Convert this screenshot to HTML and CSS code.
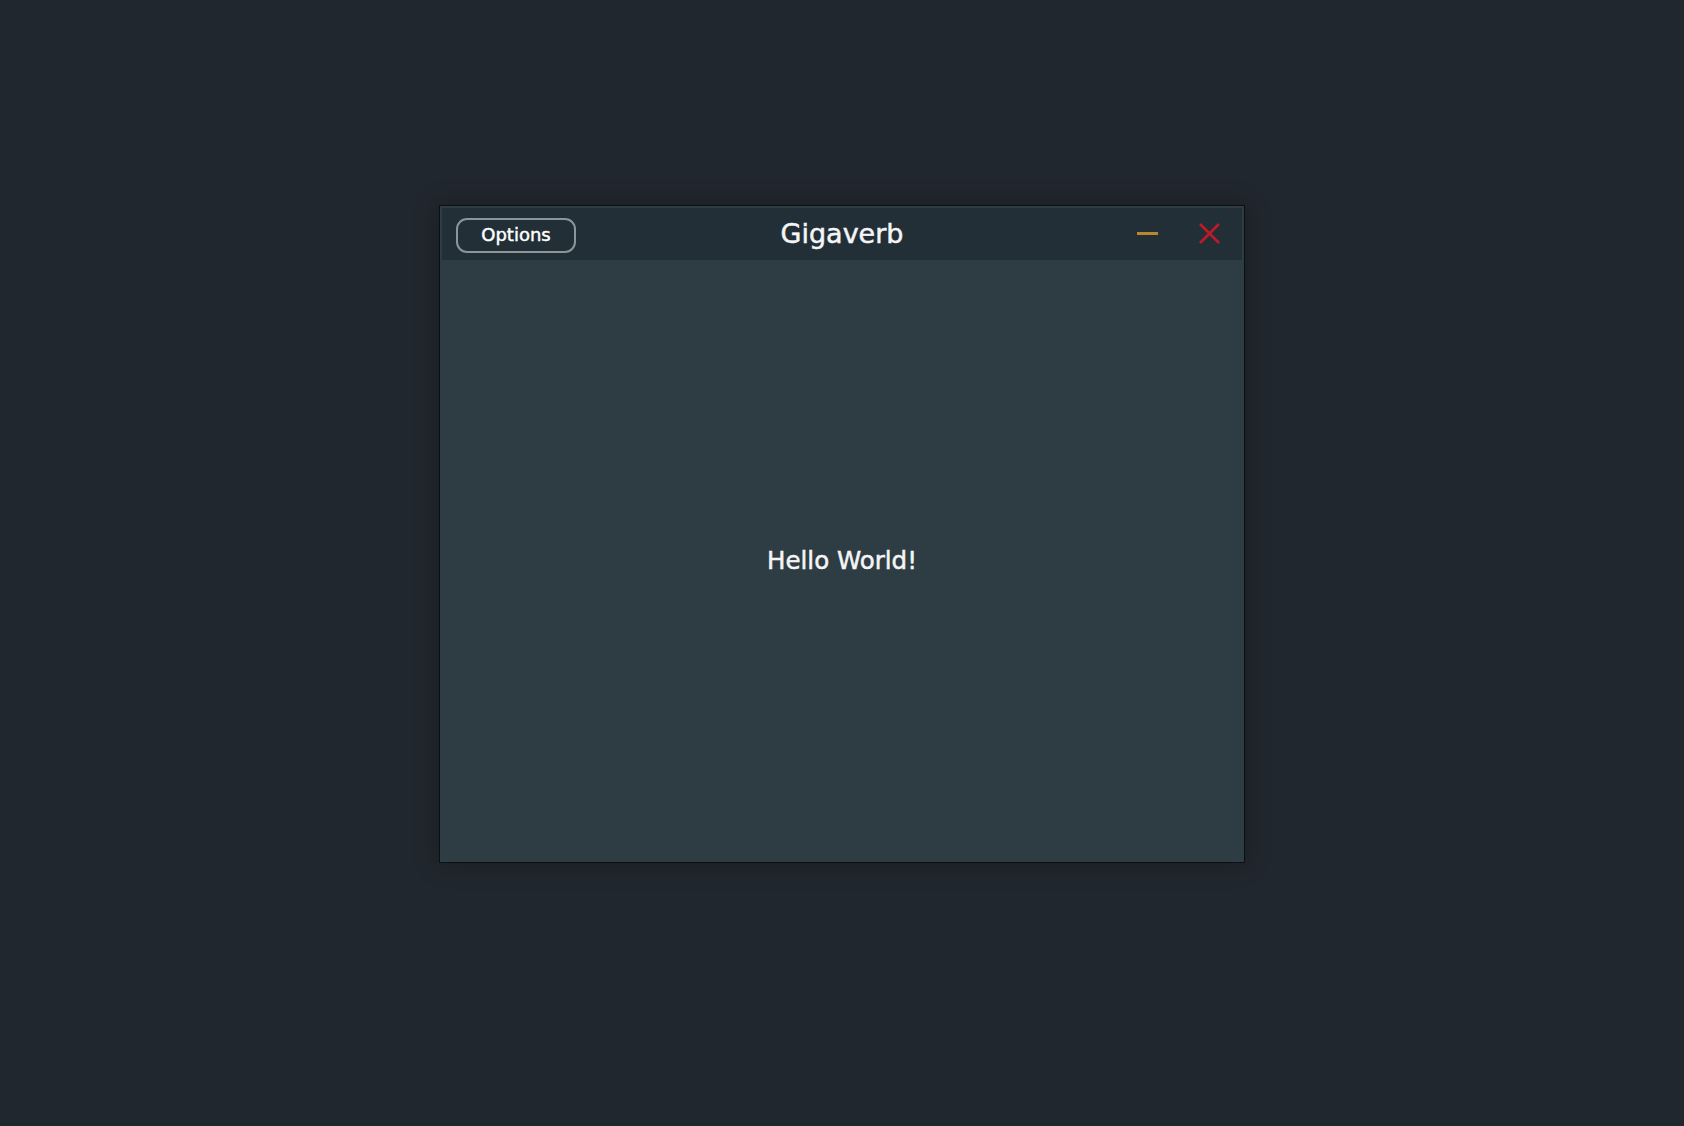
FILE: index.html
```html
<!DOCTYPE html>
<html>
<head>
<meta charset="utf-8">
<link rel="stylesheet" href="styles.css">
</head>
<body>
<div class="stage">
  <div class="window">
    <div class="titlebar">
      <div class="tb-left"><button class="options">Options</button></div>
      <div class="title">Gigaverb</div>
      <div class="tb-right">
        <svg class="icon" width="21" height="21" viewBox="0 0 21 21"><line x1="0" y1="10.5" x2="21" y2="10.5" stroke="#b8862f" stroke-width="3"/></svg>
        <svg class="icon" width="21" height="21" viewBox="0 0 21 21"><path d="M1 1 L20 20 M20 1 L1 20" stroke="#c01a2a" stroke-width="2.6" fill="none"/></svg>
      </div>
    </div>
    <div class="content">
      <div class="hello">Hello World!</div>
    </div>
  </div>
</div>
</body>
</html>
```
FILE: styles.css
```css
html, body {
  margin: 0;
  padding: 0;
}
body {
  background: #21272e;
  min-height: 1126px;
  font-family: "DejaVu Sans", Verdana, sans-serif;
  color: #f4f5f6;
}
.stage {
  display: flex;
  justify-content: center;
  padding-top: 205px;
}
.window {
  width: 800px;
  height: 654px;
  padding: 2px 2px 0;
  border: 1px solid #0c1013;
  background: #2e3c44;
  display: flex;
  flex-direction: column;
  box-shadow: 0 0 24px rgba(0, 0, 0, 0.28);
}
.titlebar {
  height: 52px;
  background: #232f36;
  display: grid;
  grid-template-columns: 1fr auto 1fr;
  align-items: center;
}
.tb-left {
  display: flex;
  padding-left: 14px;
}
.options {
  width: 120px;
  height: 35px;
  margin-top: 2px;
  border: 2px solid #8b959a;
  border-radius: 11px;
  background: transparent;
  color: #ffffff;
  font-family: "DejaVu Sans", Verdana, sans-serif;
  font-size: 18px;
  padding: 0 0 1px;
  line-height: 1;
  -webkit-text-stroke: 0.45px #ffffff;
}
.title {
  font-size: 27px;
  line-height: 1;
  margin-top: -2px;
  color: #f4f5f6;
  -webkit-text-stroke: 0.5px #f4f5f6;
}
.tb-right {
  display: flex;
  justify-content: flex-end;
  align-items: center;
  gap: 41px;
  padding-right: 22px;
  margin-top: -2px;
}
.icon {
  display: block;
}
.content {
  flex: 1;
  display: flex;
  align-items: center;
  justify-content: center;
}
.hello {
  font-size: 24.5px;
  line-height: 1;
  color: #f4f5f6;
  -webkit-text-stroke: 0.5px #f4f5f6;
}
```
